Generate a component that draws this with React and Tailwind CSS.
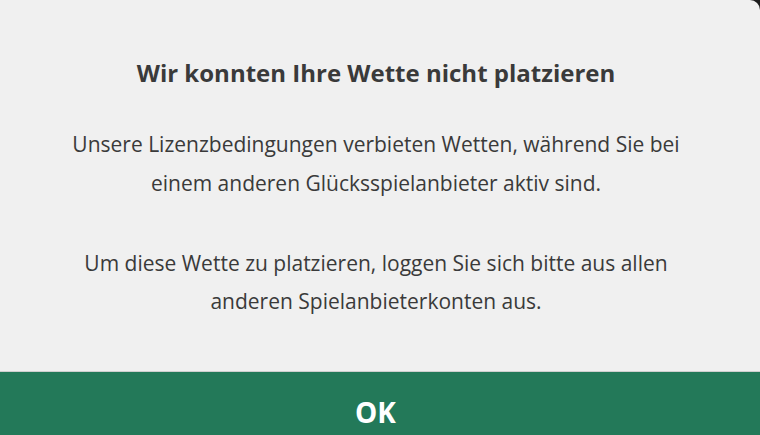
export default function App() {
  return (
    <div className="w-[760px] h-[435px] bg-[#1c1c1c] overflow-hidden">
      <div
        className="w-[760px] h-[435px] bg-[#f0f0f0] rounded-tr-[10px] flex flex-col text-[#3a3a3a] overflow-hidden"
        style={{ fontFamily: '"Open Sans", "Noto Sans", sans-serif' }}
      >
        <div className="h-[371px] shrink-0 flex flex-col items-center text-center pt-[56px] pr-[8px]">
          <h1 className="text-[24px] font-bold leading-[34px]">Wir konnten Ihre Wette nicht platzieren</h1>
          <p className="mt-[35px] text-[21px] leading-[39px]">
            Unsere Lizenzbedingungen verbieten Wetten, während Sie bei
            <br />
            einem anderen Glücksspielanbieter aktiv sind.
          </p>
          <p className="mt-[41px] text-[21px] leading-[38px]">
            Um diese Wette zu platzieren, loggen Sie sich bitte aus allen
            <br />
            anderen Spielanbieterkonten aus.
          </p>
        </div>
        <button className="h-[80px] shrink-0 pr-[9px] border-t border-[#cfcfcf] bg-[#237959] text-white text-[28px] font-bold flex items-center justify-center">
          OK
        </button>
      </div>
    </div>
  );
}
